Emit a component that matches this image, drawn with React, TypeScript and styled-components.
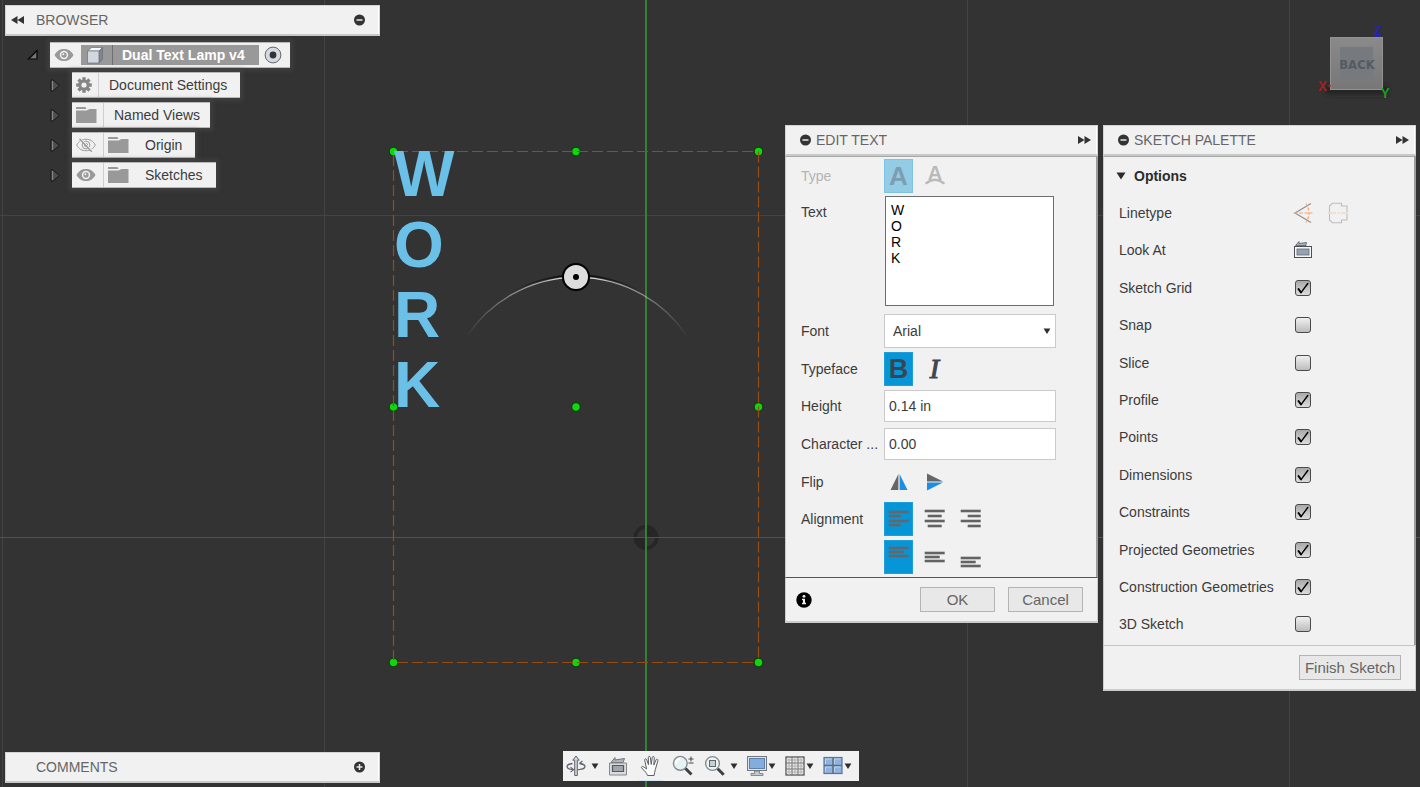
import React, { useState } from "react";
import styled, { createGlobalStyle, css } from "styled-components";

const GlobalStyle = createGlobalStyle`
  *, *::before, *::after { box-sizing: border-box; }
  body { margin: 0; background: #333333; }
  body, button, input, select, textarea {
    font-family: "Liberation Sans", Arial, sans-serif;
    font-size: 14px;
    line-height: 16px;
    color: #3c3c3c;
  }
  svg { display: block; flex: none; }
`;

/* ---------- page frame ---------- */

const Workspace = styled.div`
  position: relative;
  display: flex;
  flex-direction: column;
  justify-content: space-between;
  gap: 16px;
  min-height: 100vh;
  padding: 5px 4px 4px 5px;
  overflow: hidden;
`;

const Canvas = styled.svg`
  position: absolute;
  inset: 0;
  width: 100%;
  height: 100%;
`;

const Upper = styled.div`
  position: relative;
  display: flex;
  justify-content: space-between;
  align-items: flex-start;
`;

const Lower = styled.div`
  position: relative;
  display: grid;
  grid-template-columns: 1fr auto 1fr;
  align-items: end;
`;

const SideColumn = styled.aside`
  width: 375px;
`;

const RightColumn = styled.div`
  display: flex;
  flex-direction: column;
  align-items: flex-end;
  gap: 15px;
  padding-top: 15px;
`;

const Panels = styled.div`
  display: flex;
  align-items: flex-start;
  gap: 5px;
`;

/* ---------- panels ---------- */

const Header = styled.header<{ $side?: boolean }>`
  display: flex;
  align-items: center;
  gap: ${(p) => (p.$side ? 12 : 5)}px;
  height: 31px;
  padding: ${(p) => (p.$side ? "0 14px 0 5px" : "0 6px 0 14px")};
  background: #f1f1f1;
  border: 1px solid #d4d4d4;
  border-bottom: 2px solid #c8caca;
  box-shadow: inset -1px 0 #ffffff;
`;

const Title = styled.h2`
  flex: 1;
  margin: 0;
  font-size: 14px;
  line-height: 16px;
  font-weight: 400;
  color: #666666;
`;

const PlainButton = styled.button`
  display: grid;
  place-items: center;
  padding: 0;
  border: 0;
  background: none;
`;

const Panel = styled.section`
  width: 313px;
  background: #f1f1f1;
`;

const PanelBody = styled.div`
  display: grid;
  border: solid #c8c8c8;
  border-width: 1px 2px 0 1px;
  border-top-color: #a8a8a8;
  border-right-color: #9c9c9c;
`;

const TextBody = styled(PanelBody)`
  grid-template-rows: 37px 118px repeat(7, 1fr);
  min-height: 421px;
  padding-bottom: 1px;
`;

const OptionsBody = styled(PanelBody)`
  grid-auto-rows: 1fr;
  min-height: 489px;
  padding-bottom: 2px;
`;

const Row = styled.div<{ $top?: boolean; $wide?: boolean }>`
  display: grid;
  grid-template-columns: ${(p) => (p.$wide ? 174 : 83)}px 1fr;
  align-items: ${(p) => (p.$top ? "start" : "center")};
  padding-left: 15px;
`;

const Label = styled.label<{ $dim?: boolean; $top?: boolean }>`
  white-space: nowrap;
  color: ${(p) => (p.$dim ? "#b4b4b4" : "#3c3c3c")};
  padding-top: ${(p) => (p.$top ? 10 : 0)}px;
`;

const Choices = styled.div<{ $gap?: number }>`
  display: flex;
  align-items: center;
  gap: ${(p) => p.$gap ?? 7}px;
`;

const Choice = styled.button<{ $on?: boolean; $dim?: boolean }>`
  display: grid;
  place-items: center;
  width: 29px;
  height: 34px;
  padding: 0;
  border: 1px solid transparent;
  background: none;
  ${(p) =>
    p.$on &&
    css`
      background: ${p.$dim ? "#94cce6" : "#0696d7"};
      border-color: ${p.$dim ? "#7cc3e6" : "#1f9fda"};
    `}
`;

const Area = styled.textarea`
  width: 169px;
  height: 110px;
  margin: 2px 0 0 1px;
  padding: 5px;
  border: 1px solid #6e6e6e;
  border-radius: 0;
  background: #ffffff;
  color: #000000;
  resize: none;
  outline: none;
`;

const Field = styled.input`
  width: 172px;
  height: 32px;
  padding: 0 4px;
  border: 1px solid #cacaca;
  border-radius: 0;
  background: #ffffff;
  outline: none;
`;

const SelectBox = styled.div`
  display: grid;
  grid-template-columns: 172px;
  align-items: center;
  > * { grid-area: 1 / 1; }
  > svg { justify-self: end; margin-right: 5px; pointer-events: none; }
`;

const Select = styled.select`
  height: 34px;
  padding: 0 8px;
  appearance: none;
  border: 1px solid #cacaca;
  border-radius: 0;
  background: #ffffff;
`;

const CheckBox = styled.span`
  display: grid;
  grid-template-columns: 16px;
  width: 16px;
  margin-left: 2px;
  > * { grid-area: 1 / 1; }
  > svg { pointer-events: none; }
`;

const Tick = styled.input`
  appearance: none;
  width: 16px;
  height: 16px;
  margin: 0;
  border: 1px solid #4a4a4a;
  border-radius: 3px;
  background: linear-gradient(#f0f0f0, #bcbcbc);
  &:checked { background: linear-gradient(#a8a8a8, #dcdcdc); }
`;

const SectionToggle = styled.button`
  display: flex;
  align-items: center;
  gap: 8px;
  padding: 0 0 0 12px;
  border: 0;
  background: none;
  font-weight: 700;
  color: #2c2c2c;
`;

const Footer = styled.footer<{ $strong?: boolean }>`
  display: flex;
  align-items: center;
  gap: 13px;
  height: 46px;
  padding: 0 14px 0 10px;
  border: 1px solid #cccccc;
  border-top-color: ${(p) => (p.$strong ? "#555555" : "#c6c6c6")};
  border-bottom-width: 2px;
  > svg { margin-right: auto; }
  > button:only-child { margin-left: auto; }
`;

const PushButton = styled.button`
  min-width: 75px;
  height: 25px;
  padding: 0 5px;
  border: 1px solid #b4b4b4;
  border-radius: 0;
  background: #e8e8e8;
  font-size: 15px;
  line-height: 17px;
  color: #666666;
`;

/* ---------- browser tree ---------- */

const Tree = styled.ul`
  display: flex;
  flex-direction: column;
  gap: 4px;
  margin: 6px 0 0;
  padding: 0;
  list-style: none;
`;

const Node = styled.li<{ $root?: boolean }>`
  display: flex;
  align-items: center;
  gap: 11px;
  height: 26px;
  padding-left: ${(p) => (p.$root ? 22 : 45)}px;
`;

const NodeCard = styled.div`
  display: flex;
  align-items: center;
  height: 26px;
  background: #f1f1f1;
  border: solid #b8b8b8;
  border-width: 1px 0;
  box-shadow: 0 0 4px 3px rgba(75, 75, 75, 0.5);
`;

const NodeIcon = styled.span<{ $w: number; $line?: boolean }>`
  display: grid;
  place-items: center;
  width: ${(p) => p.$w}px;
  height: 24px;
  padding-right: 3px;
  border-right: ${(p) => (p.$line ? "1px solid #cfcfcf" : "0")};
`;

const NodeName = styled.span<{ $pad: string }>`
  padding: ${(p) => p.$pad};
  white-space: nowrap;
`;

const Selected = styled.div`
  display: flex;
  align-items: center;
  height: 20px;
  background: #999999;
  font-weight: 700;
  color: #ffffff;
`;

const BoxCell = styled.span`
  display: grid;
  place-items: center;
  width: 32px;
  height: 20px;
  padding-right: 4px;
  border-right: 1px solid #6f6f6f;
`;

/* ---------- bottom toolbar ---------- */

const Toolbar = styled.nav`
  display: flex;
  align-items: center;
  gap: 8px;
  height: 30px;
  margin-bottom: 2px;
  padding: 0 7px 0 1px;
  background: #f1f1f1;
`;

const Tool = styled(PlainButton)<{ $narrow?: boolean; $active?: boolean }>`
  width: ${(p) => (p.$narrow ? 22 : 24)}px;
  height: 30px;
  box-shadow: ${(p) => (p.$active ? "inset 0 -1px #cfe8f3" : "none")};
`;

const ToolGroup = styled.div<{ $gap: number }>`
  display: flex;
  align-items: center;
  gap: ${(p) => p.$gap}px;
`;

/* ---------- icons ---------- */

const DoubleArrow = ({ left }: { left?: boolean }) => (
  <svg width="13" height="10" viewBox="0 0 13 10" fill="#333">
    {left ? <path d="M6.500 1v8L0 5zM13 1v8L6.500 5z" /> : <path d="M0 1v8l6.500-4zM6.500 1v8L13 5z" />}
  </svg>
);

const RoundSign = ({ plus }: { plus?: boolean }) => (
  <svg width="11" height="12" viewBox="0 0 11 12">
    <circle cx="5.500" cy="6" r="5.500" fill="#333" />
    <path d={plus ? "M2.500 6h6M5.500 3v6" : "M2.500 6h6"} stroke="#e8e8e8" strokeWidth="1.500" />
  </svg>
);

const Caret = () => (
  <svg width="8" height="8" viewBox="0 0 8 8"><path d="M.6 1.500h6.800L4 7z" fill="#2e2e2e" /></svg>
);

const Eye = () => (
  <svg width="20" height="14" viewBox="0 0 20 14">
    <path d="M.5 7C3 2.600 6 1 10 1s7 1.600 9.500 6C17 11.400 14 13 10 13S3 11.400.5 7z" fill="#999" />
    <circle cx="10" cy="7" r="4.200" fill="#f1f1f1" />
    <circle cx="10" cy="7" r="2.700" fill="#999" />
    <circle cx="9.300" cy="6.200" r="1" fill="#f1f1f1" />
  </svg>
);

const EyeOff = () => (
  <svg width="20" height="14" viewBox="0 0 20 14" fill="none" stroke="#999">
    <path d="M.7 7C3 2.800 6 1.300 10 1.300S17 2.800 19.300 7C17 11.200 14 12.700 10 12.700S3 11.200.7 7z" />
    <circle cx="10" cy="7" r="3.900" />
    <circle cx="10" cy="7" r="1.600" />
    <path d="M4.200.8l12.200 13" stroke="#f1f1f1" strokeWidth="2" />
    <path d="M3.500.8l12.200 13" strokeWidth="1.300" />
  </svg>
);

const Folder = () => (
  <svg width="22" height="18" viewBox="0 0 22 18" fill="#999">
    <path d="M1 1h9.500l1 2H1zM1 4.500h10.500l3-1.500H21.500V17H1z" />
  </svg>
);

const Gear = () => (
  <svg width="16" height="16" viewBox="-8 -8 16 16">
    {[0, 45, 90, 135].map((a) => (
      <rect key={a} x="-1.700" y="-7.800" width="3.400" height="15.600" fill="#858585" transform={`rotate(${a})`} />
    ))}
    <circle r="5.600" fill="#858585" />
    <circle r="2.600" fill="#f1f1f1" />
  </svg>
);

const Expander = ({ open }: { open?: boolean }) =>
  open ? (
    <svg width="12" height="12" viewBox="0 0 12 12">
      <path d="M10 1.500v8.500H1.500z" fill="#666" stroke="#080808" strokeWidth="1.200" />
      <path d="M9 4.500v4.500H4.500z" fill="#777" />
    </svg>
  ) : (
    <svg width="11" height="13" viewBox="0 0 11 13">
      <path d="M1 .8v11.400h1.500L9.500 6.500 2.500.8z" fill="#4d4d4d" stroke="#171717" strokeWidth="1" />
      <path d="M2.500 2v9" stroke="#858585" strokeWidth="1.200" />
    </svg>
  );

const BodyIcon = () => (
  <svg width="18" height="18" viewBox="0 0 18 18" stroke="#6a6e78" strokeWidth=".7">
    <path d="M1.500 5l4-3.500h11l-3.300 3.500z" fill="#f7f8fb" />
    <path d="M1.500 5h11.700v12H1.500z" fill="#d3d7e0" />
    <path d="M13.200 5l3.300-3.500v11.800L13.200 17z" fill="#80858f" />
  </svg>
);

const ActiveDot = () => (
  <svg width="18" height="18" viewBox="0 0 18 18">
    <circle cx="9" cy="9" r="7.900" fill="#d5d9e2" stroke="#666" />
    <circle cx="9" cy="9" r="3.400" fill="#333" />
  </svg>
);

const CurvedA = () => (
  <svg width="20" height="30" viewBox="0 0 20 30">
    <text x="10" y="19" textAnchor="middle" fontFamily="Liberation Sans, Arial, sans-serif" fontSize="20" fontWeight="700" fill="#b9b9b9">A</text>
    <path d="M1.500 22Q10 15.500 18.500 22" fill="none" stroke="#b9b9b9" strokeWidth="2.500" strokeLinecap="round" />
  </svg>
);

const glyphStyles = {
  A: css`
    font-size: 26px;
    font-weight: 700;
    color: #7b9fb1;
  `,
  B: css`
    font-size: 27px;
    font-weight: 700;
    color: #3a4552;
  `,
  I: css`
    font-family: "Liberation Serif", "Times New Roman", serif;
    font-size: 28px;
    font-style: italic;
    -webkit-text-stroke: 1px #3f4550;
    color: #3f4550;
  `,
};

const Glyph = styled.span<{ $kind: "A" | "B" | "I" }>`
  line-height: 30px;
  ${(p) => glyphStyles[p.$kind]}
`;

const FlipIcon = ({ vertical }: { vertical?: boolean }) => (
  <svg width="18" height="18" viewBox="0 0 18 18">
    <path d={vertical ? "M1 8.400h16L1 .5z" : "M8.400 1v16H.5z"} fill="#666" />
    <path d={vertical ? "M1 9.600h16L1 17.500z" : "M9.600 1v16h7.900z"} fill="#1a8fe3" />
  </svg>
);

const Bars = ({ lines, on }: { lines: [number, number, number][]; on?: boolean }) => (
  <svg width="21" height="24" viewBox="0 0 21 24">
    {lines.map(([x, y, w]) => (
      <rect key={y} x={x + 0.7} y={y - 0.3} width={w} height="2.600" fill={on ? "#62676c" : "#636363"} />
    ))}
  </svg>
);

const InfoIcon = () => (
  <svg width="16" height="16" viewBox="0 0 16 16">
    <circle cx="8" cy="8" r="7.700" fill="#000" />
    <circle cx="8" cy="4.300" r="1.400" fill="#f1f1f1" />
    <path d="M6 6.800h3v4h1v1.400H6v-1.400h1V8.200H6z" fill="#f1f1f1" />
  </svg>
);

const CheckMark = () => (
  <svg width="16" height="16" viewBox="0 0 16 16" fill="none" stroke="#000" strokeLinecap="round">
    <path d="M3.500 9l2.500 3.500" strokeWidth="2" />
    <path d="M6.200 12.300L12.800 3.500" strokeWidth="1.400" />
  </svg>
);

const ConstructionLine = () => (
  <svg width="20" height="22" viewBox="0 0 20 22" fill="none">
    <path d="M18 1.500L2 11l16 9.500" stroke="#8c8c8c" strokeWidth="1.100" />
    <path d="M.5 11h19" stroke="#f3a672" strokeWidth="1.200" strokeDasharray="4 1.500" />
    <path d="M13 1.500Q19 11 13 20.500" stroke="#f3a672" strokeWidth="1.200" strokeDasharray="3 1.500" />
  </svg>
);

const CenterLine = () => (
  <svg width="20" height="22" viewBox="0 0 20 22" fill="none">
    <path d="M1.500 10V4l3-2.700h9V4H19v6M1.500 12v6l3 2.700h9V18H19v-6" stroke="#bdbdbd" strokeWidth="1.100" />
    <path d="M0 11h20" stroke="#f6cdb0" strokeWidth="1.200" strokeDasharray="8 1.500 2 1.500" />
  </svg>
);

const LookAt = () => (
  <svg width="20" height="20" viewBox="0 0 20 20">
    <path d="M2.500 5.500L6 1.500v2l7.500-1-.5 2v1z" fill="#aab0ba" stroke="#545a64" strokeWidth=".8" />
    <rect x="1.500" y="6.500" width="17" height="11" fill="#f5f6f8" stroke="#4b5058" />
    <rect x="4" y="9" width="12" height="6" fill="#98a1b0" stroke="#636974" strokeWidth=".8" />
  </svg>
);

const OrbitTool = () => (
  <svg width="22" height="22" viewBox="0 0 22 22" fill="none" stroke="#60656c">
    <path d="M7.500 8.500C4 9 2 10.200 2 11.600c0 1.900 4 3.200 9 3.200s9-1.300 9-3.200c0-1.400-2-2.600-5.500-3.100" strokeWidth="1.300" />
    <path d="M5.500 12.300l3 2.300-3 2.600M18 9.500l-3-1.500 2.500-2" strokeWidth="1.100" />
    <path d="M11 1L7.800 5.200h1.900v15.300h2.600V5.200h1.900z" fill="#d2d5da" />
  </svg>
);

const LookAtTool = () => (
  <svg width="22" height="22" viewBox="0 0 22 22">
    <path d="M3 7.500L7 2.500V5l9.500-1.500-1.500 4z" fill="#b2b5b9" stroke="#707479" />
    <path d="M1.500 8h17v12h-17z" fill="#d9dbde" stroke="#85888c" />
    <path d="M4.500 10.500h11v6h-11z" fill="#a2a6ac" stroke="#555a61" strokeWidth="1.200" />
  </svg>
);

const HandTool = () => (
  <svg width="22" height="22" viewBox="0 0 22 22">
    <path
      d="M7.500 20.500c-.5-2.500-3.200-4.500-5.800-7.600-.7-1 .6-2 1.700-1.200l3.200 2.200-1.900-8.700c-.2-1.500 1.500-1.900 2-.5l1.800 5L8.300 2.500c0-1.500 1.900-1.600 2.100-.1l.8 7 1.100-7c.3-1.400 2-1.200 2 .3l-.5 7.300 2.300-5.200c.6-1.300 2.200-.6 1.800.8l-2.600 9c-.4 2-1 3.800-1.200 5.900z"
      fill="#fbfbfb" stroke="#5c6066" strokeWidth="1" strokeLinejoin="round"
    />
  </svg>
);

const ZoomTool = () => (
  <svg width="22" height="22" viewBox="0 0 22 22">
    <circle cx="8.300" cy="8.300" r="6.900" fill="#e6f3f5" stroke="#858a8e" strokeWidth="1.400" />
    <path d="M4 8.500a4.600 4.600 0 0 1 4-4.500" stroke="#fff" strokeWidth="2" fill="none" />
    <path d="M13.500 13.500l6 6" stroke="#3d4146" strokeWidth="3" />
    <path d="M16.500 4h5M19 1.500v5M16.500 8h5" stroke="#44484d" />
  </svg>
);

const ZoomWindowTool = () => (
  <svg width="22" height="22" viewBox="0 0 22 22">
    <circle cx="8.500" cy="8.500" r="6.900" fill="#edf4f5" stroke="#858a8e" strokeWidth="1.400" />
    <rect x="5.500" y="5.500" width="6" height="6" fill="#c8cfd4" stroke="#63686e" />
    <path d="M13.700 13.700l6 6" stroke="#3d4146" strokeWidth="3" />
  </svg>
);

const DisplayTool = () => (
  <svg width="22" height="22" viewBox="0 0 22 22">
    <rect x="1.500" y="1.500" width="19" height="14" fill="#e2e4e6" stroke="#74787d" />
    <rect x="3.500" y="3.500" width="15" height="10" fill="#84acdc" stroke="#5c80b0" />
    <path d="M8.500 16h5v2.500H17v2H5v-2h3.500z" fill="#c4c7ca" stroke="#73777c" strokeWidth=".8" />
  </svg>
);

const GridTool = () => (
  <svg width="22" height="22" viewBox="0 0 22 22" fill="none">
    <rect x="2" y="2" width="18" height="18" fill="#e9e9e9" stroke="#555" strokeWidth="1.300" />
    <path d="M5 2v18M11 2v18M17 2v18M2 5h18M2 11h18M2 17h18" stroke="#b2b2b2" />
    <path d="M8 2v18M14 2v18M2 8h18M2 14h18" stroke="#777" />
  </svg>
);

const ViewportTool = () => (
  <svg width="22" height="22" viewBox="0 0 22 22">
    <rect x="2" y="2.500" width="18" height="16" fill="#8fb3de" stroke="#5f7290" strokeWidth="1.200" />
    <path d="M11 3v15.500M2 10.500h18" stroke="#5c6c84" strokeWidth="1.500" />
    <path d="M3.500 9v-5h6M12.500 9v-5h6M3.500 17v-5h6M12.500 17v-5h6" stroke="#bad2ee" fill="none" />
  </svg>
);

const ViewCube = () => (
  <svg width="104" height="90" viewBox="1312 20 104 90" role="img" aria-label="View cube">
    <defs>
      <linearGradient id="cubeFace" x1="0" y1="0" x2="0" y2="1">
        <stop offset="0" stopColor="#8a8a8a" />
        <stop offset="1" stopColor="#777777" />
      </linearGradient>
      <filter id="cubeShade" x="-20%" y="-100%" width="140%" height="300%"><feGaussianBlur stdDeviation="2.500" /></filter>
    </defs>
    <rect x="1326" y="86" width="62" height="8" fill="#222" filter="url(#cubeShade)" />
    <rect x="1330.500" y="37.500" width="52" height="52" fill="url(#cubeFace)" stroke="#929292" />
    <rect x="1340" y="47" width="33" height="33" fill="#767a7e" />
    <text x="1357" y="69" textAnchor="middle" fontSize="13" fontWeight="700" fontFamily="Liberation Sans Narrow, DejaVu Sans Condensed, sans-serif" fill="#555b63">BACK</text>
    <g fontFamily="Noto Sans, sans-serif" fontSize="14" fontWeight="600">
      <text x="1318" y="91" fill="#a82020">X</text>
      <text x="1374" y="35" fill="#2424b4">Z</text>
      <text x="1381" y="98" fill="#1ca01c">Y</text>
    </g>
    <circle cx="1329.500" cy="86" r="1.200" fill="#b01818" />
    <path d="M1375 36.500h6" stroke="#2525b0" strokeDasharray="2 1" />
  </svg>
);

/* ---------- sketch canvas ---------- */

const handleXs = [393.5, 576, 758.5];
const handleYs = [151.5, 407, 662.5];
const handles = handleYs.flatMap((y) => handleXs.map((x) => [x, y]));
const lampLetters: [string, number][] = [["W", 196], ["O", 267], ["R", 337], ["K", 407]];

const SketchCanvas = () => (
  <Canvas viewBox="0 0 1420 787" preserveAspectRatio="xMidYMid slice">
    <defs>
      <linearGradient id="arcFade" gradientUnits="userSpaceOnUse" x1="466" y1="0" x2="688" y2="0">
        <stop offset="0" stopColor="#fff" stopOpacity="0" />
        <stop offset=".35" stopColor="#ddd" stopOpacity=".75" />
        <stop offset=".5" stopColor="#fff" />
        <stop offset=".65" stopColor="#ddd" stopOpacity=".75" />
        <stop offset="1" stopColor="#fff" stopOpacity="0" />
      </linearGradient>
      <linearGradient id="arcShade" gradientUnits="userSpaceOnUse" x1="466" y1="0" x2="688" y2="0">
        <stop offset=".2" stopColor="#000" stopOpacity="0" />
        <stop offset=".5" stopColor="#000" />
        <stop offset=".8" stopColor="#000" stopOpacity="0" />
      </linearGradient>
    </defs>
    <path d="M2.500 0v787M324.500 0v787M967.500 0v787M1289.500 0v787M0 215.500h1420" stroke="#434343" fill="none" />
    <circle cx="646" cy="537.500" r="12.500" fill="#262626" />
    <path d="M646 528.500a9 9 0 0 0-9 9h9zM646 546.500a9 9 0 0 0 9-9h-9z" fill="#343434" />
    <rect x="0" y="537" width="1420" height="1" fill="#b0282b" />
    <path d="M646 0v787" stroke="#358035" strokeWidth="2" />
    <path d="M467 335A132.500 132.500 0 0 1 687 335" fill="none" stroke="url(#arcShade)" strokeWidth="1.500" transform="translate(0 -1)" />
    <path d="M467 336A132.500 132.500 0 0 1 687 336" fill="none" stroke="url(#arcFade)" strokeWidth="1.400" />
    {handles.map(([x, y]) => (
      <circle key={`${x}-${y}`} cx={x} cy={y} r="4.300" fill="#0fd60f" stroke="#12400f" strokeWidth="1.200" />
    ))}
    <path d="M397 151.500H755M397 662.500H755M393.500 155V660M758.500 151.500V660" stroke="#984c10" strokeWidth="1.200" strokeDasharray="11 4" fill="none" />
    <g fontFamily="Liberation Sans, Arial, sans-serif" fontWeight="700" fontSize="64" fill="#6bc0e8">
      {lampLetters.map(([letter, y]) => (
        <text key={letter} x="394" y={y}>{letter}</text>
      ))}
    </g>
    <circle cx="576" cy="277" r="13" fill="#dddddd" stroke="#000" strokeWidth="2" />
    <circle cx="576" cy="277" r="3" fill="#000" />
  </Canvas>
);

/* ---------- composed parts ---------- */

const options: [string, boolean][] = [
  ["Sketch Grid", true],
  ["Snap", false],
  ["Slice", false],
  ["Profile", true],
  ["Points", true],
  ["Dimensions", true],
  ["Constraints", true],
  ["Projected Geometries", true],
  ["Construction Geometries", true],
  ["3D Sketch", false],
];

const OptionRow = ({ name, initial }: { name: string; initial: boolean }) => {
  const [on, setOn] = useState(initial);
  const id = name.toLowerCase().replace(/ /g, "-");
  return (
    <Row $wide>
      <Label htmlFor={id}>{name}</Label>
      <CheckBox>
        <Tick id={id} type="checkbox" checked={on} onChange={() => setOn(!on)} />
        {on && <CheckMark />}
      </CheckBox>
    </Row>
  );
};

const TreeToggle = ({ open }: { open?: boolean }) => (
  <PlainButton aria-label={open ? "Collapse" : "Expand"}><Expander open={open} /></PlainButton>
);

const Browser = () => (
  <SideColumn>
    <Header $side>
      <PlainButton aria-label="Collapse browser"><DoubleArrow left /></PlainButton>
      <Title>BROWSER</Title>
      <PlainButton aria-label="Minimize"><RoundSign /></PlainButton>
    </Header>
    <Tree>
      <Node $root>
        <TreeToggle open />
        <NodeCard>
          <NodeIcon $w={31}><Eye /></NodeIcon>
          <Selected>
            <BoxCell><BodyIcon /></BoxCell>
            <NodeName $pad="0 14px 0 9px">Dual Text Lamp v4</NodeName>
          </Selected>
          <NodeIcon $w={31}><ActiveDot /></NodeIcon>
        </NodeCard>
      </Node>
      <Node>
        <TreeToggle />
        <NodeCard>
          <NodeIcon $w={27} $line><Gear /></NodeIcon>
          <NodeName $pad="0 13px 0 10px">Document Settings</NodeName>
        </NodeCard>
      </Node>
      <Node>
        <TreeToggle />
        <NodeCard>
          <NodeIcon $w={32} $line><Folder /></NodeIcon>
          <NodeName $pad="0 10px">Named Views</NodeName>
        </NodeCard>
      </Node>
      <Node>
        <TreeToggle />
        <NodeCard>
          <NodeIcon $w={32} $line><EyeOff /></NodeIcon>
          <NodeIcon $w={30}><Folder /></NodeIcon>
          <NodeName $pad="0 13px 0 11px">Origin</NodeName>
        </NodeCard>
      </Node>
      <Node>
        <TreeToggle />
        <NodeCard>
          <NodeIcon $w={32} $line><Eye /></NodeIcon>
          <NodeIcon $w={30}><Folder /></NodeIcon>
          <NodeName $pad="0 13px 0 11px">Sketches</NodeName>
        </NodeCard>
      </Node>
    </Tree>
  </SideColumn>
);

const PanelHeader = ({ title }: { title: string }) => (
  <Header>
    <PlainButton aria-label="Minimize"><RoundSign /></PlainButton>
    <Title>{title}</Title>
    <PlainButton aria-label="Collapse panel"><DoubleArrow /></PlainButton>
  </Header>
);

const EditText = () => (
  <Panel>
    <PanelHeader title="EDIT TEXT" />
    <TextBody>
      <Row>
        <Label as="span" $dim>Type</Label>
        <Choices>
          <Choice $on $dim disabled aria-label="Text"><Glyph $kind="A">A</Glyph></Choice>
          <Choice disabled aria-label="Text on path"><CurvedA /></Choice>
        </Choices>
      </Row>
      <Row $top>
        <Label htmlFor="text" $top>Text</Label>
        <Area id="text" defaultValue={"W\nO\nR\nK"} />
      </Row>
      <Row>
        <Label htmlFor="font">Font</Label>
        <SelectBox>
          <Select id="font" defaultValue="Arial"><option>Arial</option></Select>
          <Caret />
        </SelectBox>
      </Row>
      <Row>
        <Label as="span">Typeface</Label>
        <Choices>
          <Choice $on aria-label="Bold"><Glyph $kind="B">B</Glyph></Choice>
          <Choice aria-label="Italic"><Glyph $kind="I">I</Glyph></Choice>
        </Choices>
      </Row>
      <Row>
        <Label htmlFor="height">Height</Label>
        <Field id="height" defaultValue="0.14 in" />
      </Row>
      <Row>
        <Label htmlFor="spacing">Character ...</Label>
        <Field id="spacing" defaultValue="0.00" />
      </Row>
      <Row>
        <Label as="span">Flip</Label>
        <Choices>
          <Choice aria-label="Flip horizontally"><FlipIcon /></Choice>
          <Choice aria-label="Flip vertically"><FlipIcon vertical /></Choice>
        </Choices>
      </Row>
      <Row>
        <Label as="span">Alignment</Label>
        <Choices>
          <Choice $on aria-label="Align left"><Bars on lines={[[0, 4, 20], [0, 8, 12], [0, 13, 20], [0, 17, 12]]} /></Choice>
          <Choice aria-label="Align center"><Bars lines={[[0, 3, 20], [3, 8, 14], [0, 13, 20], [3, 18, 14]]} /></Choice>
          <Choice aria-label="Align right"><Bars lines={[[0, 3, 20], [7, 8, 13], [0, 13, 20], [7, 18, 13]]} /></Choice>
        </Choices>
      </Row>
      <Row>
        <span />
        <Choices>
          <Choice $on aria-label="Align top"><Bars on lines={[[0, 2, 20], [0, 6, 15], [0, 10, 20]]} /></Choice>
          <Choice aria-label="Align middle"><Bars lines={[[0, 7, 20], [0, 11, 15], [0, 15, 20]]} /></Choice>
          <Choice aria-label="Align bottom"><Bars lines={[[0, 12, 20], [0, 16, 15], [0, 20, 20]]} /></Choice>
        </Choices>
      </Row>
    </TextBody>
    <Footer $strong>
      <InfoIcon />
      <PushButton>OK</PushButton>
      <PushButton>Cancel</PushButton>
    </Footer>
  </Panel>
);

const SketchPalette = () => (
  <Panel>
    <PanelHeader title="SKETCH PALETTE" />
    <OptionsBody>
      <SectionToggle aria-expanded="true">
        <svg width="10" height="8" viewBox="0 0 10 8"><path d="M.5.500h9L5 7.500z" fill="#2c2c2c" /></svg>
        Options
      </SectionToggle>
      <Row $wide>
        <Label as="span">Linetype</Label>
        <Choices $gap={15}>
          <PlainButton aria-label="Construction"><ConstructionLine /></PlainButton>
          <PlainButton aria-label="Centerline"><CenterLine /></PlainButton>
        </Choices>
      </Row>
      <Row $wide>
        <Label as="span">Look At</Label>
        <Choices><PlainButton aria-label="Look At"><LookAt /></PlainButton></Choices>
      </Row>
      {options.map(([name, on]) => (
        <OptionRow key={name} name={name} initial={on} />
      ))}
    </OptionsBody>
    <Footer><PushButton>Finish Sketch</PushButton></Footer>
  </Panel>
);

const NavBar = () => (
  <Toolbar aria-label="Navigation">
    <ToolGroup $gap={3}>
      <Tool aria-label="Orbit"><OrbitTool /></Tool>
      <PlainButton aria-label="Orbit menu"><Caret /></PlainButton>
    </ToolGroup>
    <Tool aria-label="Look at"><LookAtTool /></Tool>
    <Tool aria-label="Pan" $active><HandTool /></Tool>
    <Tool aria-label="Zoom"><ZoomTool /></Tool>
    <ToolGroup $gap={3}>
      <Tool aria-label="Zoom window"><ZoomWindowTool /></Tool>
      <PlainButton aria-label="Zoom menu"><Caret /></PlainButton>
    </ToolGroup>
    <ToolGroup $gap={0}>
      <Tool $narrow aria-label="Display"><DisplayTool /></Tool>
      <PlainButton aria-label="Display menu"><Caret /></PlainButton>
    </ToolGroup>
    <ToolGroup $gap={0}>
      <Tool $narrow aria-label="Grid"><GridTool /></Tool>
      <PlainButton aria-label="Grid menu"><Caret /></PlainButton>
    </ToolGroup>
    <ToolGroup $gap={0}>
      <Tool $narrow aria-label="Viewports"><ViewportTool /></Tool>
      <PlainButton aria-label="Viewports menu"><Caret /></PlainButton>
    </ToolGroup>
  </Toolbar>
);

const CommentsHeader = styled(Header)`
  padding-left: 30px;
`;

export default function App() {
  return (
    <Workspace>
      <GlobalStyle />
      <SketchCanvas />
      <Upper>
        <Browser />
        <RightColumn>
          <ViewCube />
          <Panels>
            <EditText />
            <SketchPalette />
          </Panels>
        </RightColumn>
      </Upper>
      <Lower>
        <SideColumn>
          <CommentsHeader $side>
            <Title>COMMENTS</Title>
            <PlainButton aria-label="Expand comments"><RoundSign plus /></PlainButton>
          </CommentsHeader>
        </SideColumn>
        <NavBar />
      </Lower>
    </Workspace>
  );
}
